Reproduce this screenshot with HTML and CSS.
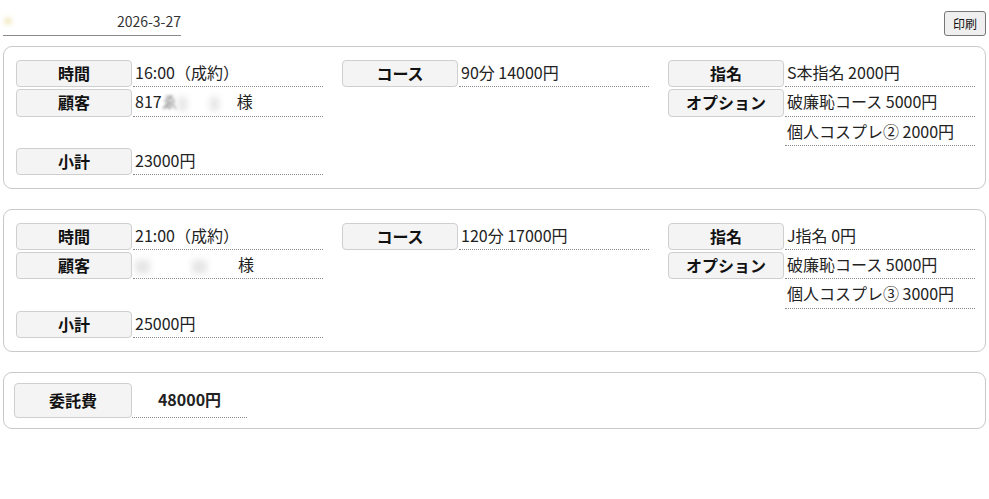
FILE: index.html
```html
<!DOCTYPE html>
<html lang="ja">
<head>
<meta charset="utf-8">
<link rel="stylesheet" href="styles.css">
</head>
<body>
<div class="topbar">
  <div class="date"><span class="blob"></span>2026-3-27</div>
  <button class="print">印刷</button>
</div>

<section class="card">
  <div class="col">
    <div class="row"><div class="lbl">時間</div><div class="val">16:00（成約）</div></div>
    <div class="row"><div class="lbl">顧客</div><div class="val">817<span class="blur">ゑ</span><span class="blurred w1"></span>様</div></div>
    <div class="row"></div>
    <div class="row"><div class="lbl">小計</div><div class="val">23000円</div></div>
  </div>
  <div class="col">
    <div class="row"><div class="lbl">コース</div><div class="val">90分 14000円</div></div>
  </div>
  <div class="col">
    <div class="row"><div class="lbl">指名</div><div class="val">S本指名 2000円</div></div>
    <div class="row"><div class="lbl">オプション</div><div class="val">破廉恥コース 5000円</div></div>
    <div class="row"><div class="lbl empty"></div><div class="val">個人コスプレ② 2000円</div></div>
  </div>
</section>

<section class="card">
  <div class="col">
    <div class="row"><div class="lbl">時間</div><div class="val">21:00（成約）</div></div>
    <div class="row"><div class="lbl">顧客</div><div class="val"><span class="blurred w2"></span>様</div></div>
    <div class="row"></div>
    <div class="row"><div class="lbl">小計</div><div class="val">25000円</div></div>
  </div>
  <div class="col">
    <div class="row"><div class="lbl">コース</div><div class="val">120分 17000円</div></div>
  </div>
  <div class="col">
    <div class="row"><div class="lbl">指名</div><div class="val">J指名 0円</div></div>
    <div class="row"><div class="lbl">オプション</div><div class="val">破廉恥コース 5000円</div></div>
    <div class="row"><div class="lbl empty"></div><div class="val">個人コスプレ③ 3000円</div></div>
  </div>
</section>

<section class="card total">
  <div class="row big"><div class="lbl">委託費</div><div class="val">48000円</div></div>
</section>
</body>
</html>
```

FILE: styles.css
```css
* { box-sizing: border-box; }
body {
  margin: 0;
  padding: 11px 3px;
  font-family: "Noto Sans CJK JP", "Noto Sans", sans-serif;
  font-size: 16px;
  color: #222;
  background: #fff;
}
.topbar {
  display: flex;
  justify-content: space-between;
  align-items: flex-start;
  height: 35px;
}
.date {
  width: 178px;
  height: 25px;
  border-bottom: 1px solid #8a8a8a;
  text-align: right;
  font-size: 14px;
  line-height: 20px;
  color: #333;
  position: relative;
}
.blob {
  position: absolute;
  left: 1px;
  top: 6px;
  width: 8px;
  height: 8px;
  border-radius: 50%;
  background: #f3ecc8;
  filter: blur(2px);
}
.print {
  font-family: "Noto Sans CJK JP", sans-serif;
  font-size: 12px;
  padding: 0 8px;
  height: 25px;
  line-height: 22px;
  background: #efefef;
  border: 1px solid #777;
  border-radius: 3px;
  color: #111;
}
.card {
  border: 1px solid #c9c9c9;
  border-radius: 9px;
  padding: 13px 12px 12.5px;
  margin-bottom: 20px;
  display: grid;
  grid-template-columns: repeat(3, 307px);
  column-gap: 19px;
  align-items: start;
}
.col {
  display: flex;
  flex-direction: column;
  gap: 2px;
}
.row {
  display: flex;
  height: 27.33px;
}
.lbl {
  width: 116px;
  flex: none;
  height: 27.33px;
  border: 1px solid #cfcfcf;
  border-radius: 4px;
  background: #f4f4f4;
  font-weight: bold;
  text-align: center;
  line-height: 25px;
  color: #111;
}
.lbl.empty {
  visibility: hidden;
}
.val {
  flex: 1;
  margin-left: 1px;
  height: 27.33px;
  border-bottom: 1px dotted #8a8a8a;
  padding-left: 2px;
  line-height: 25px;
  white-space: nowrap;
}
.blur {
  filter: blur(1.5px);
  opacity: 0.6;
}
.blurred {
  display: inline-block;
  filter: blur(3px);
  background: linear-gradient(90deg, #e6e6e6 0 15%, transparent 15% 55%, #e6e6e6 55% 70%, transparent 70%);
  height: 14px;
  vertical-align: middle;
}
.blurred.w1 { width: 59px; }
.blurred.w2 { width: 103px; }
.total {
  display: block;
  padding: 10px 10px;
}
.row.big {
  height: 35px;
}
.big .lbl {
  width: 118px;
  height: 35px;
  line-height: 33px;
}
.big .val {
  flex: none;
  width: 115px;
  height: 35px;
  margin-left: 0;
  text-align: center;
  font-weight: bold;
  line-height: 33px;
  padding-left: 0;
}
```
